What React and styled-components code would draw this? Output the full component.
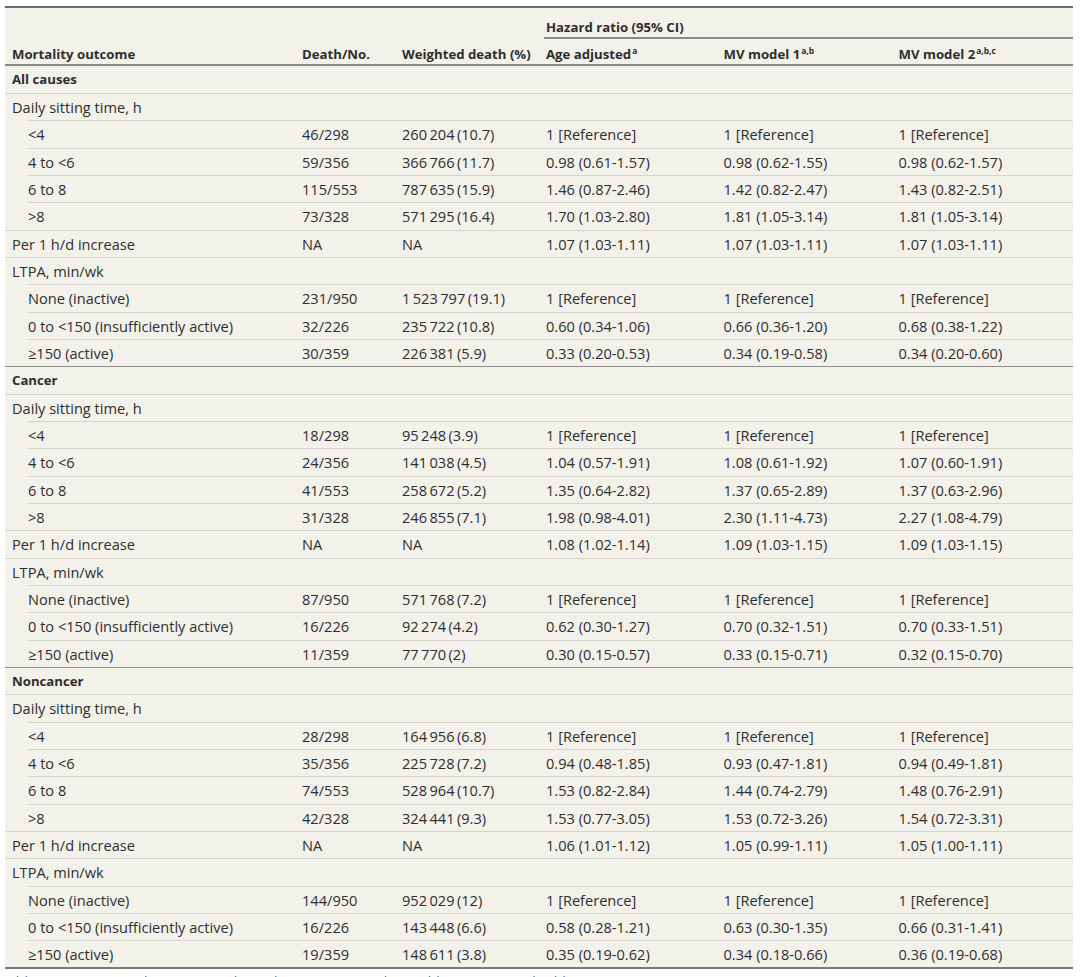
import React from "react";
import styled, { createGlobalStyle } from "styled-components";

const GlobalStyle = createGlobalStyle`
  body {
    margin: 0;
    background: #ffffff;
    font-family: "Open Sans", "Liberation Sans", Arial, sans-serif;
    color: #2f2f2f;
  }
`;

const COLS = "290px 100px 144px 177.5px 175px 181.5px";
const ROW_H = 27.34;

const Page = styled.div`
  padding: 6px 7px 0 5px;
`;

const Table = styled.div`
  width: 1068px;
  background: #f2f1ea;
  border-bottom: 2px solid #7a7a7a;
`;

const Header = styled.div`
  display: grid;
  grid-template-columns: ${COLS};
  grid-template-rows: 31.3px 1fr;
  box-sizing: border-box;
  height: 59.66px;
  border-top: 2px solid #6a6a6a;
  border-bottom: 2px solid #8a8a8a;
  font-weight: 700;
  font-size: 13.2px;
  color: #2e2e2e;
`;

const HeadCell = styled.div`
  grid-row: 2;
  align-self: end;
  padding: 0 0 1px 7px;
  line-height: 18px;
  white-space: nowrap;
`;

const SpanHead = styled.div`
  grid-row: 1;
  grid-column: 4 / 7;
  display: flex;
  align-items: flex-end;
  margin-left: 5px;
  padding: 0 0 1px 2px;
  line-height: 18px;
  border-bottom: 2px solid #8a8a8a;
`;

const Sup = styled.sup`
  font-size: 0.64em;
  vertical-align: 0.5em;
  line-height: 0;
  margin-left: 1px;
`;

const lineFor = (line) => {
  if (line === "none") return "none";
  if (line === "dark")
    return "linear-gradient(#8e8e8e, #8e8e8e) no-repeat left top / 100% 1px";
  if (line === "indent")
    return "linear-gradient(#d6d5cd, #d6d5cd) no-repeat right top / calc(100% - 23px) 1px";
  return "linear-gradient(#d6d5cd, #d6d5cd) no-repeat left top / 100% 1px";
};

const Row = styled.div`
  display: grid;
  grid-template-columns: ${COLS};
  align-items: center;
  height: ${ROW_H}px;
  padding-top: ${(p) => (p.$line === "none" ? 0 : 1)}px;
  box-sizing: border-box;
  background: ${(p) => lineFor(p.$line)};
  font-size: 14.6px;
  font-weight: 500;
  line-height: 18px;
`;

const Cell = styled.div`
  padding-left: 7px;
  white-space: nowrap;
`;

const Label = styled(Cell)`
  padding-left: ${(p) => (p.$indent ? 23 : 7)}px;
  font-weight: ${(p) => (p.$bold ? 700 : 500)};
  font-size: ${(p) => (p.$bold ? "13.2px" : "inherit")};
  color: ${(p) => (p.$bold ? "#2e2e2e" : "inherit")};
`;

const Footnote = styled.p`
  margin: 3px 0 0;
  padding-left: 2px;
  font-size: 14px;
  color: #6a6a6a;
  white-space: nowrap;
`;

const REF = "1 [Reference]";
const ref = [REF, REF, REF];
const t = (s) => s.replace(/ /g, "\u2009");

const makeSection = (title, d) => [
  { type: "section", label: title },
  { type: "group", label: "Daily sitting time, h" },
  { type: "item", label: "<4", cells: [d[0][0], t(d[0][1]), ...ref] },
  { type: "item", label: "4 to <6", cells: [d[1][0], t(d[1][1]), ...d[1][2]] },
  { type: "item", label: "6 to 8", cells: [d[2][0], t(d[2][1]), ...d[2][2]] },
  { type: "item", label: ">8", cells: [d[3][0], t(d[3][1]), ...d[3][2]] },
  { type: "group", label: "Per 1 h/d increase", cells: ["NA", "NA", ...d[4]] },
  { type: "group", label: "LTPA, min/wk" },
  { type: "item", label: "None (inactive)", cells: [d[5][0], t(d[5][1]), ...ref] },
  {
    type: "item",
    label: "0 to <150 (insufficiently active)",
    cells: [d[6][0], t(d[6][1]), ...d[6][2]],
  },
  { type: "item", label: "≥150 (active)", cells: [d[7][0], t(d[7][1]), ...d[7][2]] },
];

const rows = [
  ...makeSection("All causes", [
    ["46/298", "260 204 (10.7)"],
    ["59/356", "366 766 (11.7)", ["0.98 (0.61-1.57)", "0.98 (0.62-1.55)", "0.98 (0.62-1.57)"]],
    ["115/553", "787 635 (15.9)", ["1.46 (0.87-2.46)", "1.42 (0.82-2.47)", "1.43 (0.82-2.51)"]],
    ["73/328", "571 295 (16.4)", ["1.70 (1.03-2.80)", "1.81 (1.05-3.14)", "1.81 (1.05-3.14)"]],
    ["1.07 (1.03-1.11)", "1.07 (1.03-1.11)", "1.07 (1.03-1.11)"],
    ["231/950", "1 523 797 (19.1)"],
    ["32/226", "235 722 (10.8)", ["0.60 (0.34-1.06)", "0.66 (0.36-1.20)", "0.68 (0.38-1.22)"]],
    ["30/359", "226 381 (5.9)", ["0.33 (0.20-0.53)", "0.34 (0.19-0.58)", "0.34 (0.20-0.60)"]],
  ]),
  ...makeSection("Cancer", [
    ["18/298", "95 248 (3.9)"],
    ["24/356", "141 038 (4.5)", ["1.04 (0.57-1.91)", "1.08 (0.61-1.92)", "1.07 (0.60-1.91)"]],
    ["41/553", "258 672 (5.2)", ["1.35 (0.64-2.82)", "1.37 (0.65-2.89)", "1.37 (0.63-2.96)"]],
    ["31/328", "246 855 (7.1)", ["1.98 (0.98-4.01)", "2.30 (1.11-4.73)", "2.27 (1.08-4.79)"]],
    ["1.08 (1.02-1.14)", "1.09 (1.03-1.15)", "1.09 (1.03-1.15)"],
    ["87/950", "571 768 (7.2)"],
    ["16/226", "92 274 (4.2)", ["0.62 (0.30-1.27)", "0.70 (0.32-1.51)", "0.70 (0.33-1.51)"]],
    ["11/359", "77 770 (2)", ["0.30 (0.15-0.57)", "0.33 (0.15-0.71)", "0.32 (0.15-0.70)"]],
  ]),
  ...makeSection("Noncancer", [
    ["28/298", "164 956 (6.8)"],
    ["35/356", "225 728 (7.2)", ["0.94 (0.48-1.85)", "0.93 (0.47-1.81)", "0.94 (0.49-1.81)"]],
    ["74/553", "528 964 (10.7)", ["1.53 (0.82-2.84)", "1.44 (0.74-2.79)", "1.48 (0.76-2.91)"]],
    ["42/328", "324 441 (9.3)", ["1.53 (0.77-3.05)", "1.53 (0.72-3.26)", "1.54 (0.72-3.31)"]],
    ["1.06 (1.01-1.12)", "1.05 (0.99-1.11)", "1.05 (1.00-1.11)"],
    ["144/950", "952 029 (12)"],
    ["16/226", "143 448 (6.6)", ["0.58 (0.28-1.21)", "0.63 (0.30-1.35)", "0.66 (0.31-1.41)"]],
    ["19/359", "148 611 (3.8)", ["0.35 (0.19-0.62)", "0.34 (0.18-0.66)", "0.36 (0.19-0.68)"]],
  ]),
];

const lineType = (row, i) => {
  if (i === 0) return "none";
  if (row.type === "section") return "dark";
  if (row.type === "item") return "indent";
  return "full";
};

export default function App() {
  return (
    <>
      <GlobalStyle />
      <Page>
        <Table>
          <Header>
            <SpanHead>Hazard ratio (95% CI)</SpanHead>
            <HeadCell>Mortality outcome</HeadCell>
            <HeadCell>Death/No.</HeadCell>
            <HeadCell>Weighted death (%)</HeadCell>
            <HeadCell>
              Age adjusted<Sup>a</Sup>
            </HeadCell>
            <HeadCell>
              MV model 1<Sup>a,b</Sup>
            </HeadCell>
            <HeadCell>
              MV model 2<Sup>a,b,c</Sup>
            </HeadCell>
          </Header>
          {rows.map((row, i) => (
            <Row key={i} $line={lineType(row, i)}>
              <Label $indent={row.type === "item"} $bold={row.type === "section"}>
                {row.label}
              </Label>
              {row.cells && row.cells.map((c, j) => <Cell key={j}>{c}</Cell>)}
            </Row>
          ))}
        </Table>
        <Footnote>
          Abbreviations: LTPA, leisure-time physical activity; MV, multivariable; NA, not
          applicable.
        </Footnote>
      </Page>
    </>
  );
}
